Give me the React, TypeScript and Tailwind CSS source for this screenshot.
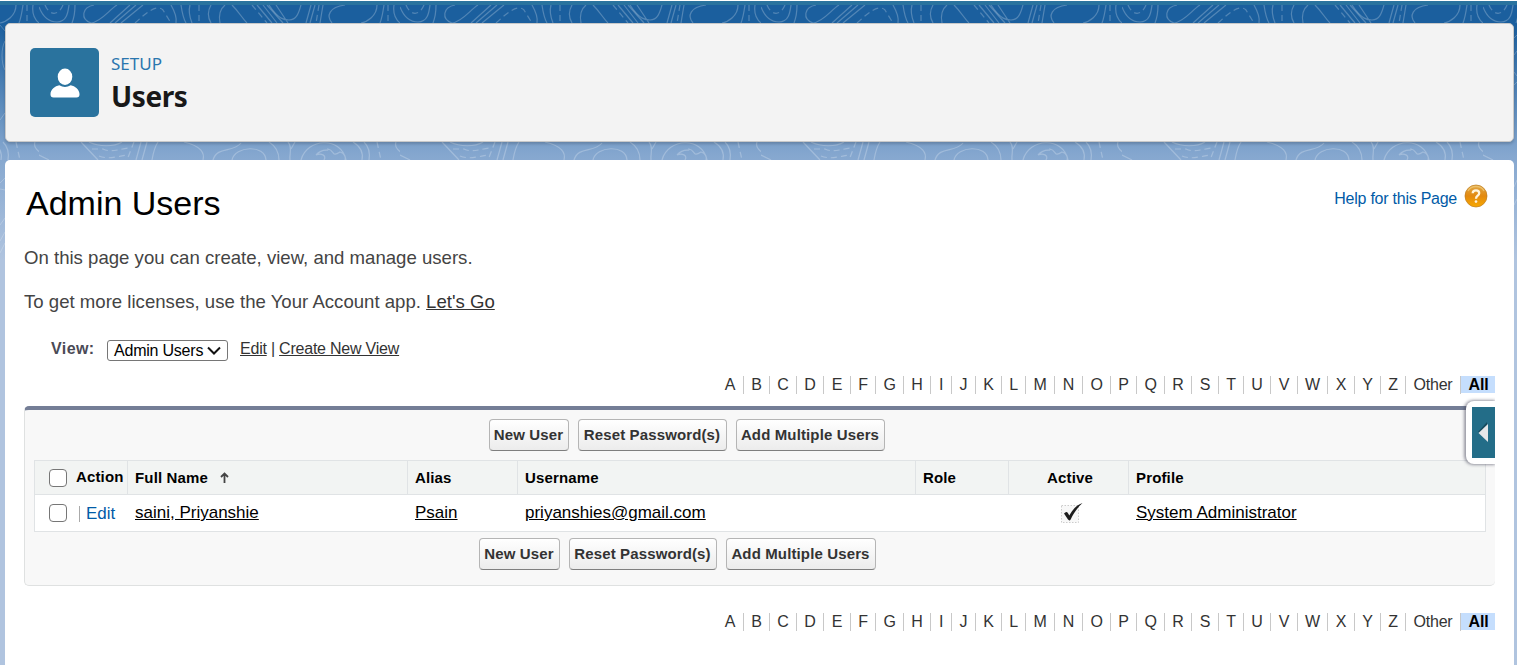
import React from "react";

const letters = [..."ABCDEFGHIJKLMNOPQRSTUVWXYZ"];

const contours = [
  "M0 7 C5 20 12 22 18 22 C28 22 29 12 30 5",
  "M36 5 C36 12 35 18 33 23",
  "M55 5 C43 7 41 19 52 23 C62 22 70 10 78 5",
  "M91 5 L71 23 M97 5 L76 23 M104 5 L82 23",
  "M132 5 C136 12 138 18 137 23 M142 5 C143 12 144 18 147 23 M151 5 C149 12 151 18 153 23",
  "M172 5 C168 12 169 18 172 23 M186 5 C180 10 180 18 181 23",
  "M193 5 C200 12 203 18 208 23 M218 5 L233 23 M224 5 L238 23 M228 5 L244 23",
  "M230 5 C240 20 246 20 250 20 C258 20 260 12 262 5 M237 5 L249 23",
  "M272 5 L267 23 M276 5 L271 23 M284 5 L281 23",
  "M306 5 C290 7 287 16 293 23 M338 5 C338 16 328 22 322 23",
  "M345 5 C344 12 343 18 341 23 M355 5 C354 12 356 19 361 23",
  "M0 155 L10 160 M42 142 L59 160 M50 142 C60 147 75 147 83 142",
  "M102 142 L97 160 M108 142 L103 160 M119 142 C115 148 114 154 113 160",
  "M145 142 C162 146 166 153 164 160 M174 160 C178 146 194 153 202 143",
  "M193 160 C196 146 226 144 227 160 M230 142 C238 147 240 153 240 160",
  "M249 142 C254 148 250 154 251 160 M256 142 L252 149",
  "M262 160 C268 138 302 136 307 160 M277 155 C284 147 290 152 289 149 C296 150 292 158 301 152 C306 153 307 158 306 160 M277 155 C282 153 288 155 285 160",
  "M314 142 C324 148 324 155 323 160 M325 142 C331 148 331 154 330 160",
  "M357 142 C354 150 366 154 373 160",
];

const dashedContours = [
  "M6 5 C10 15 19 17 24 5",
  "M96 23 C108 12 118 4 124 10 L132 23",
  "M160 5 V23 M213 5 L228 23 M280 5 L277 23 M349 5 V23",
  "M53 149 H64 C72 153 80 149 90 148 M60 156 C70 160 80 156 88 155 M95 142 L88 160",
  "M338 142 L342 160",
];

function Backdrop() {
  return (
    <svg className="absolute inset-0 -z-10 h-full w-full" aria-hidden="true">
      <defs>
        <pattern id="topo" x="400" y="0" width="361" height="665" patternUnits="userSpaceOnUse">
          <g fill="none" stroke="#fff" strokeOpacity="0.24" strokeWidth="1.2">
            {contours.map((d) => <path key={d} d={d} />)}
            {dashedContours.map((d) => <path key={d} d={d} strokeDasharray="6 4" />)}
          </g>
        </pattern>
      </defs>
      <rect width="100%" height="100%" fill="url(#topo)" />
      <g fill="none" stroke="#fff" strokeOpacity="0.22">
        <path d="M5 41 C1 48 1 63 5 70 M0 25 L5 31 M0 120 L5 113 M0 183 L5 178 M0 189 L5 190 M0 225 L5 218 M0 241 L5 232 M0 253 L5 243" />
        <path d="M1514 38 L1517 35 M1514 55 L1517 51 M1514 72 L1517 76 M1514 85 L1517 82 M1514 187 L1517 180 M1514 205 L1517 199" />
      </g>
    </svg>
  );
}

function AlphaBar() {
  return (
    <nav className="ml-auto grid h-[18px] w-[778px] grid-cols-[27px_26px_27px_27px_27px_25px_28px_27px_21px_24px_26px_24px_29px_28px_28px_26px_28px_27px_27px_25px_27px_27px_30px_27px_26px_25px_55px_34px] text-center text-[16px] leading-[17px] tracking-[-0.2px] text-[#333]">
      {letters.map((l) => (
        <a key={l} className="h-[18px] border-r border-[#c8c8c8]">{l}</a>
      ))}
      <a className="h-[18px] border-r border-[#c8c8c8]">Other</a>
      <a className="h-[17px] bg-[#c5defd] pl-px font-bold text-black">All</a>
    </nav>
  );
}

function ActionButton({ label, width }: { label: string; width: string }) {
  return (
    <button
      className={`${width} h-8 shrink-0 whitespace-nowrap rounded border border-[#b5b5b5] border-b-[#7f7f7f] bg-linear-to-b from-white to-[#ececec] pr-px pb-[2px] text-[15px] font-bold leading-none tracking-[0.13px] text-[#333]`}
    >
      {label}
    </button>
  );
}

function Check() {
  return <input type="checkbox" className="block size-[18px] shrink-0 appearance-none rounded-[4px] border-[1.5px] border-[#767676] bg-white" />;
}

function HelpIcon() {
  return (
    <svg width="24" height="24" viewBox="0 0 24 24">
      <defs>
        <linearGradient id="orb" x1="0" y1="0" x2="0" y2="1">
          <stop offset="0" stopColor="#dfa848" />
          <stop offset="0.5" stopColor="#e3890f" />
          <stop offset="1" stopColor="#f8a900" />
        </linearGradient>
      </defs>
      <circle cx="12" cy="12" r="11" fill="url(#orb)" stroke="#bd7a1c" strokeOpacity="0.7" />
      <path d="M4 7 C7 1 17 1 20 7" fill="none" stroke="#f2cd7c" strokeWidth="1.4" opacity="0.7" />
      <path d="M8.7 9.2 C8.8 5.4 15.2 5.4 15.2 9.2 C15.2 11.7 12 11.8 12 14.7" fill="none" stroke="#fff4dc" strokeWidth="2.3" />
      <circle cx="12" cy="17.6" r="1.35" fill="#fff4dc" />
    </svg>
  );
}

function ActiveMark() {
  return (
    <svg width="24" height="24" viewBox="0 0 24 24" className="block">
      <rect x="2.5" y="4.5" width="17" height="17" fill="#f8f8f8" stroke="#ccc" strokeDasharray="1.5 1.5" />
      <path d="M5 12.5 Q7.5 9.5 9 12.2 L10.3 14.5 C13.5 8.5 17.5 4.2 23.5 2 C18.5 6.5 14.5 12.5 11.8 18.2 Q10.5 20.4 9 18.6 Z" fill="#1d1d1d" />
    </svg>
  );
}

const columns = "grid grid-cols-[93px_280px_110px_398px_93px_120px_1fr]";

export default function App() {
  return (
    <div className="relative isolate flex h-[665px] w-[1517px] flex-col overflow-hidden bg-[linear-gradient(to_bottom,#1b5f9e_0px,#1b5f9e_24px,#85a7cf_155px,#b0c4df_260px)] font-['Liberation_Sans',sans-serif]">
      <Backdrop />
      <div className="h-[5px] shrink-0 border-t border-white bg-[#2a739e]" />

      <header className="mt-[18px] mr-[3px] ml-[5px] flex h-[119px] shrink-0 items-start rounded-[5px] border border-[#c9c9c9] bg-[#f3f3f3] pt-6 pl-6 shadow-[0_2px_3px_rgba(0,0,0,0.18)]">
        <div className="flex size-[69px] items-center justify-center rounded-[5px] bg-[#2a739e]">
          <svg width="30" height="31" viewBox="0 0 30 31" fill="#fff" className="mt-px">
            <ellipse cx="15" cy="8.8" rx="7.3" ry="8.2" />
            <path d="M9.3 17.2 Q15 20.8 20.7 17.2 C25 18 29.5 21.5 29.5 26 V26.5 Q29.5 29.5 26.5 29.5 H3.5 Q.5 29.5 .5 26.5 V26 C.5 21.5 5 18 9.3 17.2Z" />
          </svg>
        </div>
        <div className="ml-3 font-['Noto_Sans','Open_Sans',sans-serif]">
          <div className="mt-[5px] text-[17px] leading-[22px] text-[#2a76ae]">SETUP</div>
          <h1 className="mt-[2px] text-[28px] leading-[38px] font-bold tracking-[-0.4px] text-[#181818]">Users</h1>
        </div>
      </header>

      <main className="mt-[18px] mr-[3px] ml-[5px] flex grow flex-col rounded-t-[5px] bg-white pr-[19px] pl-[19px]">
        <div className="flex h-[63px] items-start justify-between">
          <h2 className="mt-[23px] ml-[2px] text-[34px] leading-10 text-black">Admin Users</h2>
          <div className="mt-6 mr-[7px] flex h-6 items-center gap-[7px] text-[16px] tracking-[-0.25px] text-[#015ba7]">
            <a className="mt-[6px]">Help for this Page</a>
            <HelpIcon />
          </div>
        </div>

        <p className="mt-[24px] text-[18.6px] leading-[22px] text-[#444]">On this page you can create, view, and manage users.</p>
        <p className="mt-[22px] text-[18.6px] leading-[22px] text-[#444]">
          To get more licenses, use the Your Account app. <a className="text-[#333] underline">Let's Go</a>
        </p>

        <div className="mt-[26px] ml-[27px] flex h-[22px] items-start text-[16px] leading-[18px] tracking-[-0.22px] text-[#333]">
          <span className="w-14 pt-px text-[16px] font-bold tracking-[0.4px] text-[#4a4a56]">View:</span>
          <button className="mt-[1px] flex h-[21px] w-[121px] items-center gap-1 rounded-[3px] border border-[#767676] bg-white pl-[6px] text-black">
            <span className="whitespace-nowrap">Admin Users</span>
            <svg width="14" height="9" viewBox="0 0 14 9" className="shrink-0">
              <path d="M1 1.5 L7 7.5 L13 1.5" fill="none" stroke="#111" strokeWidth="2" />
            </svg>
          </button>
          <span className="ml-3 pt-px whitespace-pre"><a className="underline">Edit</a> | <a className="underline">Create New View</a></span>
        </div>

        <div className="mt-[15px] flex"><AlphaBar /></div>

        <section className="relative mt-[12px] h-[180px] shrink-0 rounded-[5px] border border-t-4 border-r-0 border-[#dfe1e1] border-t-[#747e96] bg-[#f8f8f8] pr-[9px] pl-[9px]">
          <div className="mt-[9px] ml-[455px] flex gap-[9px]">
            <ActionButton label="New User" width="w-20" />
            <ActionButton label="Reset Password(s)" width="w-[149px]" />
            <ActionButton label="Add Multiple Users" width="w-[149px]" />
          </div>

          <div className="mt-[9px] border border-[#e0e3e5] bg-white text-black">
            <div className={`${columns} h-[34px] border-b border-[#e0e3e5] bg-[#f2f4f3] text-[15px] leading-[34px] font-bold tracking-[0.15px] *:border-r *:border-[#e0e3e5]`}>
              <div className="flex items-center gap-[9px] pl-[14px]"><Check /><span className="-mt-[2px]">Action</span></div>
              <div className="flex items-center pl-[7px]">
                Full Name
                <svg width="11" height="12" viewBox="0 0 11 12" className="ml-[11px] -mt-px">
                  <path d="M5.5 11 V2 M2 5 L5.5 1.5 L9 5" fill="none" stroke="#444" strokeWidth="1.8" />
                </svg>
              </div>
              <div className="pl-[7px]">Alias</div>
              <div className="pl-[7px]">Username</div>
              <div className="pl-[7px]">Role</div>
              <div className="pl-[3px] text-center">Active</div>
              <div className="border-r-0! pl-[7px]">Profile</div>
            </div>
            <div className={`${columns} h-9 text-[17px] leading-[35px]`}>
              <div className="flex items-center pl-[14px]">
                <Check />
                <span className="mt-[2px] ml-[12px] h-[16px] w-px bg-[#aaa]" />
                <a className="ml-[6px] text-[17px] text-[#015ba7]">Edit</a>
              </div>
              <div className="pl-[7px]"><a className="underline">saini, Priyanshie</a></div>
              <div className="pl-[7px]"><a className="underline">Psain</a></div>
              <div className="pl-[7px]"><a className="underline">priyanshies@gmail.com</a></div>
              <div />
              <div className="flex items-start pt-[6px] pl-[50px]"><ActiveMark /></div>
              <div className="pl-[7px]"><a className="underline">System Administrator</a></div>
            </div>
          </div>

          <div className="mt-[6px] ml-[445px] flex gap-[9px]">
            <ActionButton label="New User" width="w-[81px]" />
            <ActionButton label="Reset Password(s)" width="w-[148px]" />
            <ActionButton label="Add Multiple Users" width="w-[150px]" />
          </div>

          <div className="absolute -top-[15px] right-0 h-[74px] w-[34px] overflow-hidden pt-[6px] pl-[5px]">
            <div className="flex h-[63px] items-start rounded-l-[8px] bg-white pt-[6px] pl-[6px] shadow-[-1px_0_3px_1px_rgba(60,60,80,0.5)]">
              <div className="flex h-[51px] w-[23px] items-center justify-center bg-[#236d88]">
                <svg width="13" height="22" viewBox="0 0 13 22">
                  <path d="M10 0 L1 10 L10 14Z" fill="#164b5e" />
                  <path d="M11 2 L1.5 11 L11 20Z" fill="#e5e7e9" />
                </svg>
              </div>
            </div>
          </div>
        </section>

        <div className="mt-[27px] flex"><AlphaBar /></div>
      </main>
    </div>
  );
}
